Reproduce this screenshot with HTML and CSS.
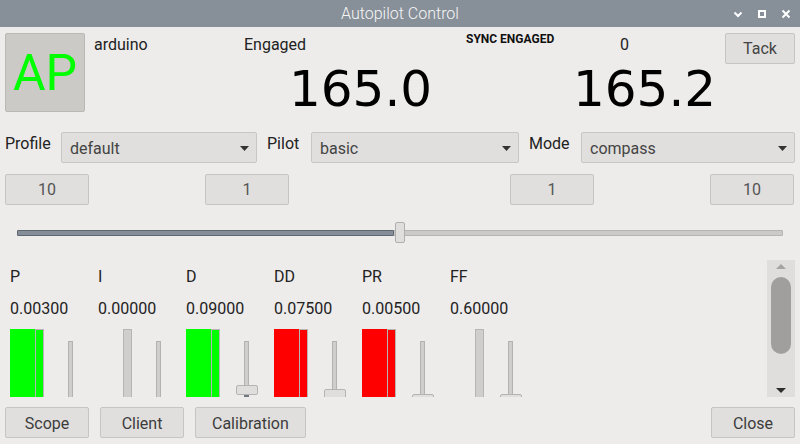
FILE: index.html
```html
<!DOCTYPE html>
<html>
<head>
<meta charset="utf-8">
<link rel="stylesheet" href="styles.css">
</head>
<body>
<div class="titlebar">
  <span class="title">Autopilot Control</span>
  <div class="wm">
    <svg viewBox="0 0 12 12"><polyline points="2.5,4.5 6,8 9.5,4.5" fill="none" stroke="#fff" stroke-width="2"/></svg>
    <svg viewBox="0 0 12 12"><rect x="3" y="3" width="6" height="6" fill="none" stroke="#fff" stroke-width="2"/></svg>
    <svg viewBox="0 0 12 12"><path d="M2.5 2.5 L9.5 9.5 M9.5 2.5 L2.5 9.5" fill="none" stroke="#fff" stroke-width="2"/></svg>
  </div>
</div>
<div class="content">
  <div class="header">
    <div class="ap">AP</div>
    <div class="info">
      <div class="info-top">
        <span class="servo">arduino</span>
        <span class="engaged">Engaged</span>
        <span class="sync">SYNC ENGAGED</span>
        <span class="zero">0</span>
      </div>
      <div class="info-big">
        <span class="heading first">165.0</span>
        <span class="heading">165.2</span>
      </div>
    </div>
    <div class="btn tack">Tack</div>
  </div>

  <div class="combos">
    <span class="combo-label">Profile</span>
    <div class="combo"><span>default</span><svg class="arrow" viewBox="0 0 9 5"><polygon points="0,0 9,0 4.5,5" fill="#333"/></svg></div>
    <span class="combo-label">Pilot</span>
    <div class="combo"><span>basic</span><svg class="arrow" viewBox="0 0 9 5"><polygon points="0,0 9,0 4.5,5" fill="#333"/></svg></div>
    <span class="combo-label">Mode</span>
    <div class="combo"><span>compass</span><svg class="arrow" viewBox="0 0 9 5"><polygon points="0,0 9,0 4.5,5" fill="#333"/></svg></div>
  </div>

  <div class="steps">
    <div class="btn step c1">10</div>
    <div class="btn step c3">1</div>
    <div class="btn step c5">1</div>
    <div class="btn step c7">10</div>
  </div>

  <div class="slider">
    <div class="groove">
      <div class="groove-fill" style="width:49.35%"></div>
      <div class="slider-handle" style="left:49.35%"></div>
    </div>
  </div>

  <div class="gains">
    <div class="gains-view">
      <div class="gain">
        <div class="gain-label">P</div>
        <div class="gain-value">0.00300</div>
        <div class="meters">
          <div class="bar green"></div>
          <div class="meter green"></div>
          <div class="vslider" style="--h:90px"><div class="vfill"></div><div class="vhandle"></div></div>
        </div>
      </div>
      <div class="gain">
        <div class="gain-label">I</div>
        <div class="gain-value">0.00000</div>
        <div class="meters">
          <div class="bar"></div>
          <div class="meter"></div>
          <div class="vslider" style="--h:90px"><div class="vfill"></div><div class="vhandle"></div></div>
        </div>
      </div>
      <div class="gain">
        <div class="gain-label">D</div>
        <div class="gain-value">0.09000</div>
        <div class="meters">
          <div class="bar green"></div>
          <div class="meter green"></div>
          <div class="vslider" style="--h:43px"><div class="vfill"></div><div class="vhandle"></div></div>
        </div>
      </div>
      <div class="gain">
        <div class="gain-label">DD</div>
        <div class="gain-value">0.07500</div>
        <div class="meters">
          <div class="bar red"></div>
          <div class="meter red"></div>
          <div class="vslider" style="--h:47px"><div class="vfill"></div><div class="vhandle"></div></div>
        </div>
      </div>
      <div class="gain">
        <div class="gain-label">PR</div>
        <div class="gain-value">0.00500</div>
        <div class="meters">
          <div class="bar red"></div>
          <div class="meter red"></div>
          <div class="vslider" style="--h:52px"><div class="vfill"></div><div class="vhandle"></div></div>
        </div>
      </div>
      <div class="gain">
        <div class="gain-label">FF</div>
        <div class="gain-value">0.60000</div>
        <div class="meters">
          <div class="bar"></div>
          <div class="meter"></div>
          <div class="vslider" style="--h:52px"><div class="vfill"></div><div class="vhandle"></div></div>
        </div>
      </div>
    </div>
    <div class="scrollbar">
      <svg class="sb-arrow" viewBox="0 0 10 5"><polygon points="0,5 10,5 5,0" fill="#a4a4a4"/></svg>
      <div class="sb-thumb"></div>
      <div class="sb-space"></div>
      <svg class="sb-arrow down" viewBox="0 0 10 5"><polygon points="0,0 10,0 5,5" fill="#2e2e2e"/></svg>
    </div>
  </div>

  <div class="footer">
    <div class="btn foot">Scope</div>
    <div class="btn foot">Client</div>
    <div class="btn foot">Calibration</div>
    <div class="btn foot close">Close</div>
  </div>
</div>
</body>
</html>
```
FILE: styles.css
```css
* { box-sizing: border-box; }
html, body { margin: 0; padding: 0; }
body {
  width: 800px;
  height: 444px;
  overflow: hidden;
  background: #edecea;
  font-family: Roboto, "Liberation Sans", sans-serif;
  font-size: 16px;
  color: #2a2a2a;
}

.titlebar {
  height: 27px;
  background: #878f99;
  display: grid;
  grid-template-columns: 1fr auto 1fr;
  align-items: center;
  color: #f6f6f6;
}
.title {
  grid-column: 2;
  font-weight: 300;
  font-size: 16px;
  line-height: 27px;
}
.wm {
  grid-column: 3;
  justify-self: end;
  display: flex;
  gap: 12px;
  padding-right: 8px;
}
.wm svg { width: 12px; height: 12px; display: block; }

.content { padding: 6px 5px 0; }

.btn {
  background: #e0dfdd;
  border: 1px solid #c6c5c3;
  border-radius: 2px;
  height: 31px;
  display: flex;
  align-items: center;
  justify-content: center;
  color: #444;
  font-size: 16px;
  line-height: 19px;
}

.header { display: flex; height: 79px; }
.ap {
  width: 80px;
  height: 79px;
  flex: none;
  background: #cbcac6;
  border: 1px solid #b9b8b4;
  border-radius: 2px;
  color: #00ff00;
  font-size: 50px;
  display: flex;
  align-items: center;
  justify-content: center;
}
.info { flex: 1; display: flex; flex-direction: column; }
.info-top { height: 38px; display: flex; align-items: flex-start; }
.servo, .engaged, .zero { line-height: 19px; padding-top: 2px; color: #222; }
.servo { margin-left: 9px; width: 150px; }
.engaged { width: 222px; }
.sync { width: 153px; font-size: 12px; font-weight: 700; line-height: 13px; color: #111; }
.zero { padding-left: 1px; }
.info-big { display: flex; padding-left: 204px; }
.heading {
  font-family: "DejaVu Sans", sans-serif;
  font-size: 50px;
  line-height: 46px;
  color: #000;
}
.heading.first { width: 284px; }
.tack { width: 70px; flex: none; }

.combos {
  display: grid;
  grid-template-columns: 46px 196px 34px 208px 42px 214px;
  column-gap: 10px;
  margin-top: 20px;
}
.combo-label { line-height: 19px; padding-top: 2px; color: #222; }
.combo {
  height: 31px;
  background: #e0dfdd;
  border: 1px solid #c8c7c5;
  border-radius: 2px;
  display: flex;
  align-items: center;
  justify-content: space-between;
  padding: 1px 7px 0 8px;
  color: #444;
  line-height: 19px;
}
.arrow { width: 9px; height: 5px; display: block; }

.steps {
  display: grid;
  grid-template-columns: 84px 116px 84px 221px 84px 116px 84px;
  margin-top: 11px;
}
.c1 { grid-column: 1; }
.c3 { grid-column: 3; }
.c5 { grid-column: 5; }
.c7 { grid-column: 7; }
.step { color: #555; }

.slider {
  margin-top: 17px;
  height: 21px;
  padding: 8px 12px 0;
}
.groove {
  position: relative;
  height: 6px;
  background: #cbcac8;
  border: 1px solid #b6b5b3;
  border-radius: 1px;
}
.groove-fill {
  position: absolute;
  left: -1px;
  top: -1px;
  bottom: -1px;
  background: #858e98;
  border: 1px solid #5f6770;
  border-radius: 1px;
}
.slider-handle {
  position: absolute;
  top: -9px;
  width: 10px;
  height: 21px;
  background: #dfdedc;
  border: 1px solid #b0afad;
  border-radius: 2px;
}

.gains { margin-top: 17px; height: 137px; display: flex; }
.gains-view {
  flex: 1;
  overflow: hidden;
  display: flex;
  padding: 7px 0 0 5px;
}
.gain { width: 88px; flex: none; }
.gain-label { line-height: 19px; color: #222; }
.gain-value { line-height: 19px; margin-top: 13px; color: #222; }
.meters { display: flex; margin-top: 11px; height: 130px; }
.bar { width: 25px; height: 130px; }
.meter {
  width: 9px;
  height: 130px;
  background: #cfcecc;
  border: 1px solid #b6b5b3;
}
.green { background: #00ff00; }
.red { background: #ff0000; }
.bar.green, .bar.red { border: none; }
.vslider {
  position: relative;
  width: 5px;
  height: 90px;
  margin: 12px 0 0 24px;
  background: #cfcecc;
  border: 1px solid #b3b2b0;
}
.vfill {
  position: absolute;
  left: -1px;
  right: -1px;
  top: calc(var(--h) + 5px);
  bottom: -1px;
  background: #6f7780;
}
.vhandle {
  position: absolute;
  left: -9px;
  top: var(--h);
  width: 22px;
  height: 10px;
  background: #dfdedc;
  border: 1px solid #b5b4b2;
  border-radius: 2px;
}

.scrollbar {
  width: 28px;
  flex: none;
  background: #dfdedc;
  display: flex;
  flex-direction: column;
  align-items: center;
}
.sb-arrow { width: 10px; height: 5px; display: block; margin-top: 4px; flex: none; }
.sb-arrow.down { margin-top: 0; margin-bottom: 4px; }
.sb-thumb {
  width: 20px;
  height: 77px;
  margin-top: 8px;
  background: #a09f9d;
  border-radius: 10px;
  flex: none;
}
.sb-space { flex: 1; }

.footer { margin-top: 10px; display: flex; gap: 11px; }
.foot { min-width: 84px; padding: 1px 16px 0; color: #3c3c3c; }
.close { margin-left: auto; }
```
